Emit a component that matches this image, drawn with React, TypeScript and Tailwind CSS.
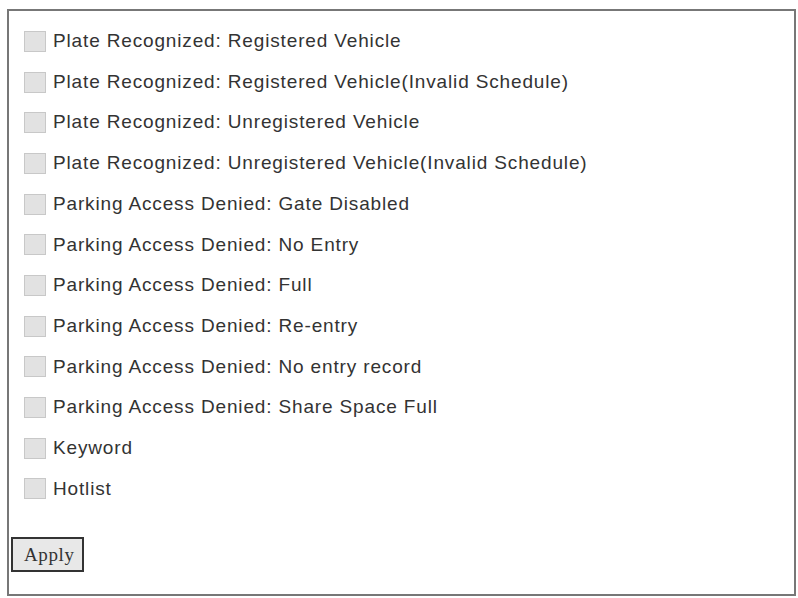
import React from 'react';

const options = [
  'Plate Recognized: Registered Vehicle',
  'Plate Recognized: Registered Vehicle(Invalid Schedule)',
  'Plate Recognized: Unregistered Vehicle',
  'Plate Recognized: Unregistered Vehicle(Invalid Schedule)',
  'Parking Access Denied: Gate Disabled',
  'Parking Access Denied: No Entry',
  'Parking Access Denied: Full',
  'Parking Access Denied: Re-entry',
  'Parking Access Denied: No entry record',
  'Parking Access Denied: Share Space Full',
  'Keyword',
  'Hotlist',
];

export default function App() {
  return (
    <div className="h-[598px] w-[798px] bg-white pl-[7px] pr-[2px] pt-[9px] pb-[2px]">
      <div className="flex h-[587px] flex-col border-2 border-[#777] pl-[15px] pt-[10px]">
        <div className="flex flex-col">
          {options.map((label) => (
            <label key={label} className="flex h-[40.7px] items-center gap-[7px]">
              <span className="h-[21px] w-[22px] shrink-0 border border-[#c8c8c8] bg-[#e2e2e2]" />
              <span className="font-['Liberation_Sans',Arial,sans-serif] text-[19px] tracking-[0.85px] text-[#333]">
                {label}
              </span>
            </label>
          ))}
        </div>
        <div className="-ml-[13px] mt-[28px]">
          <button className="h-[35px] w-[73px] border-2 border-[#333] bg-[#e8e8e8] pl-[11px] text-left font-['Liberation_Serif','Times_New_Roman',serif] text-[19px] tracking-[0.6px] text-[#333]">
            Apply
          </button>
        </div>
      </div>
    </div>
  );
}
